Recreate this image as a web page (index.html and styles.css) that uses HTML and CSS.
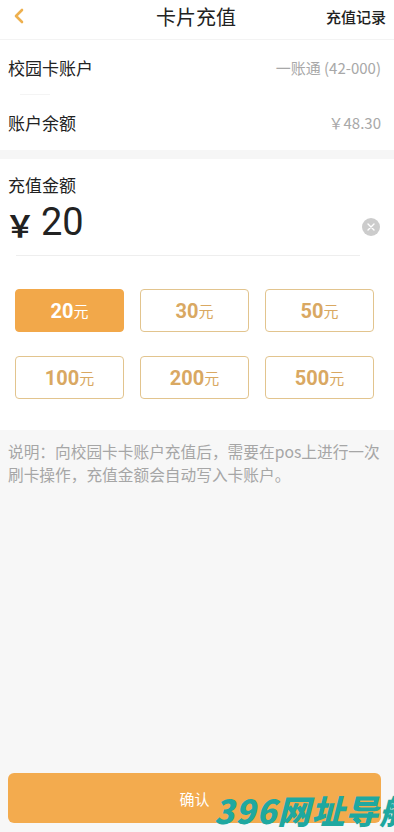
FILE: index.html
```html
<!DOCTYPE html>
<html lang="zh">
<head>
<meta charset="utf-8">
<title>卡片充值</title>
<link rel="stylesheet" href="styles.css">
</head>
<body>
<div class="page">
  <header class="topbar">
    <span class="back">
      <svg width="14" height="16" viewBox="0 0 14 16"><path d="M10 2 L4 8 L10 14" fill="none" stroke="#eeb04f" stroke-width="2.6" stroke-linecap="round" stroke-linejoin="round"/></svg>
    </span>
    <h1 class="title">卡片充值</h1>
    <span class="records">充值记录</span>
  </header>
  <section class="info">
    <div class="row">
      <span class="label">校园卡账户</span>
      <span class="value">一账通 (42-000)</span>
    </div>
    <div class="divider"></div>
    <div class="row">
      <span class="label">账户余额</span>
      <span class="value">￥48.30</span>
    </div>
  </section>
  <div class="band"></div>
  <section class="recharge">
    <div class="label">充值金额</div>
    <div class="amount-row">
      <span class="yen">￥</span>
      <span class="amount">20</span>
      <span class="clear">
        <svg width="18" height="18" viewBox="0 0 18 18"><circle cx="9" cy="9" r="9" fill="#cccccc"/><path d="M6 6 L12 12 M12 6 L6 12" stroke="#fff" stroke-width="1.4" stroke-linecap="round"/></svg>
      </span>
    </div>
    <div class="amount-line"></div>
    <div class="options">
      <div class="opt active"><b>20</b>元</div>
      <div class="opt"><b>30</b>元</div>
      <div class="opt"><b>50</b>元</div>
      <div class="opt"><b>100</b>元</div>
      <div class="opt"><b>200</b>元</div>
      <div class="opt"><b>500</b>元</div>
    </div>
  </section>
  <section class="notes">
    <p class="note">说明：向校园卡卡账户充值后，需要在pos上进行一次刷卡操作，充值金额会自动写入卡账户。</p>
    <div class="spacer"></div>
    <button class="confirm">确认</button>
  </section>
  <div class="watermark">396网址导航</div>
</div>
</body>
</html>
```
FILE: styles.css
```css
* { box-sizing: border-box; }
html, body { margin: 0; padding: 0; }
body {
  font-family: "Noto Sans CJK SC", "Noto Sans", Roboto, sans-serif;
  color: #222;
  background: #fff;
}
.page {
  width: 394px;
  height: 832px;
  display: flex;
  flex-direction: column;
  position: relative;
  overflow: hidden;
}
.topbar {
  height: 40px;
  display: flex;
  align-items: center;
  justify-content: space-between;
  padding: 0 8px 0 12px;
  border-bottom: 1px solid #f3f3f3;
}
.back { width: 60px; display: flex; align-items: center; padding-bottom: 8px; }
.title {
  margin: 0;
  font-size: 20px;
  font-weight: 400;
  color: #222;
  line-height: 1;
  padding-bottom: 6px;
}
.records {
  width: 66px;
  text-align: right;
  font-size: 15px;
  font-weight: 500;
  color: #222;
  padding-bottom: 6px;
}
.info { padding: 0 13px 0 8px; }
.row {
  height: 54px;
  display: flex;
  align-items: center;
  justify-content: space-between;
}
.label { font-size: 17px; color: #222; }
.value { font-size: 15px; color: #a8a8a8; }
.divider {
  height: 1px;
  margin-left: 12px;
  width: 30px;
  background: #f4f4f4;
}
.band {
  height: 9px;
  background: #f6f6f6;
  margin-top: 1px;
}
.recharge {
  padding: 14px 0 0 0;
  height: 271px;
}
.recharge .label { padding-left: 8px; line-height: 24px; }
.amount-row {
  display: flex;
  align-items: center;
  height: 50px;
  padding: 0 14px 0 5px;
}
.yen { font-size: 30px; font-weight: 700; color: #222; margin-right: 6px; margin-top: 4px; }
.amount { font-size: 38px; color: #222; font-family: Roboto, "Noto Sans", sans-serif; flex: 1; }
.clear { display: flex; margin-top: 10px; }
.amount-line {
  height: 1px;
  background: #eeeeee;
  margin: 8px 34px 0 16px;
}
.options {
  display: grid;
  grid-template-columns: repeat(3, 109px);
  column-gap: 16px;
  row-gap: 24px;
  padding: 33px 0 0 15px;
}
.opt {
  height: 43px;
  border: 1px solid #e2c48e;
  border-radius: 4px;
  display: flex;
  align-items: center;
  justify-content: center;
  color: #d9a862;
  font-size: 15px;
}
.opt b {
  font-family: Roboto, "Noto Sans", sans-serif;
  font-size: 20px;
  font-weight: 700;
}
.opt.active {
  background: #f2a84a;
  border-color: #f2a84a;
  color: #fff;
}
.notes {
  flex: 1;
  background: #f7f7f7;
  display: flex;
  flex-direction: column;
  padding: 10px 8px 9px 8px;
}
.note {
  margin: 0;
  font-size: 15.7px;
  line-height: 23px;
  color: #a6a6a6;
}
.spacer { flex: 1; }
.confirm {
  height: 50px;
  border: 0;
  border-radius: 6px;
  background: #f3ab4e;
  color: #fff;
  font-family: "Noto Sans CJK SC", sans-serif;
  font-size: 15px;
  margin-right: 5px;
}
.watermark {
  position: absolute;
  left: 214px;
  top: 790px;
  font-family: "Noto Sans CJK SC", sans-serif;
  font-weight: 900;
  font-style: italic;
  font-size: 33px;
  letter-spacing: 1px;
  color: #1fa8a0;
  white-space: nowrap;
  line-height: 40px;
}
```
